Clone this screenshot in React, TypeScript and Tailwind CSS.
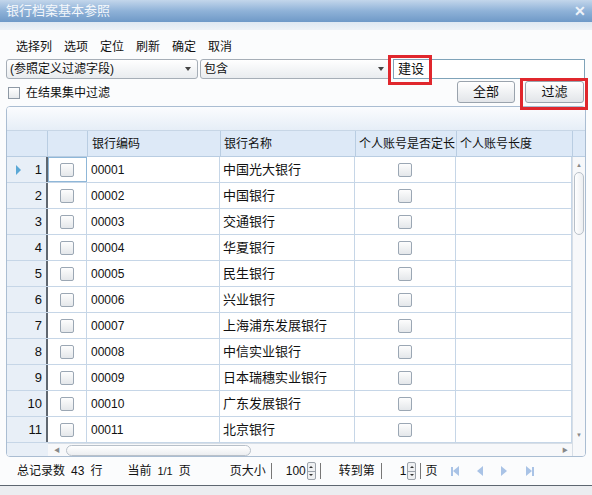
import React from "react";

const rows = [
  ["00001", "中国光大银行"],
  ["00002", "中国银行"],
  ["00003", "交通银行"],
  ["00004", "华夏银行"],
  ["00005", "民生银行"],
  ["00006", "兴业银行"],
  ["00007", "上海浦东发展银行"],
  ["00008", "中信实业银行"],
  ["00009", "日本瑞穗实业银行"],
  ["00010", "广东发展银行"],
  ["00011", "北京银行"],
];

function Box() {
  return (
    <div className="w-[14px] h-[14px] border border-[#9ba7b4] rounded-[2px] bg-gradient-to-b from-[#fdfdfd] to-[#e4e7ea]" />
  );
}

function Spin() {
  return (
    <div className="flex flex-col w-[9px] h-[18px] border border-[#9ca3ab] rounded-[2px] bg-[#eef0f2] ml-[1px]">
      <div className="flex-1 flex items-center justify-center border-b border-[#9ca3ab]">
        <div className="w-0 h-0 border-l-[2px] border-r-[2px] border-b-[2px] border-l-transparent border-r-transparent border-b-[#333]" />
      </div>
      <div className="flex-1 flex items-center justify-center">
        <div className="w-0 h-0 border-l-[2px] border-r-[2px] border-t-[2px] border-l-transparent border-r-transparent border-t-[#333]" />
      </div>
    </div>
  );
}

function Combo({ text, w }: { text: string; w: string }) {
  return (
    <div className={`${w} h-[20px] border border-[#a6aeb7] rounded-[3px] bg-gradient-to-b from-[#ffffff] to-[#e9ecef] flex items-center pl-[3px] pr-[6px]`}>
      <span className="flex-1">{text}</span>
      <div className="w-0 h-0 border-l-[3px] border-r-[3px] border-t-[4px] border-l-transparent border-r-transparent border-t-[#444]" />
    </div>
  );
}

export default function App() {
  const font = { fontFamily: '"Liberation Sans", "Noto Sans CJK SC", sans-serif' };
  return (
    <div className="relative w-[592px] h-[495px] bg-[#ebedf0] flex flex-col text-[12px] text-[#111] overflow-hidden" style={font}>
      {/* title bar */}
      <div className="h-[22px] flex items-center justify-between px-[6px] bg-gradient-to-b from-[#c3d6eb] via-[#8fb2d8] to-[#6f99c7]">
        <span className="text-[13px] text-[#f4f7fb]">银行档案基本参照</span>
        <span className="text-[14px] font-bold text-[#eef3f9] leading-none">✕</span>
      </div>
      <div className="h-[8px] bg-gradient-to-b from-[#dfe8f2] to-[#eef2f7]" />
      {/* content */}
      <div className="flex-1 flex flex-col bg-[#fbfcfd] px-[6px]">
        {/* menu */}
        <div className="h-[27px] flex items-end pb-[1px] pl-[10px] gap-[12px] text-[12px]">
          <span>选择列</span>
          <span>选项</span>
          <span>定位</span>
          <span>刷新</span>
          <span>确定</span>
          <span>取消</span>
        </div>
        {/* filter row */}
        <div className="mt-[2px] flex items-center gap-[2px] h-[20px]">
          <Combo text="(参照定义过滤字段)" w="w-[192px]" />
          <Combo text="包含" w="w-[191px]" />
          <div className="w-[192px] h-[20px] border border-[#7fa3b9] bg-white flex items-center pl-[4px] text-[13px]">建设</div>
        </div>
        {/* check + buttons */}
        <div className="flex items-start h-[25px] mt-[2px]">
          <div className="flex items-center mt-[3px] ml-[2px] gap-[6px]">
            <div className="w-[12px] h-[12px] border border-[#8e99a5] bg-gradient-to-b from-white to-[#e6e9ec]" />
            <span>在结果集中过滤</span>
          </div>
          <div className="ml-auto flex gap-[10px] mr-[2px]">
            <div className="w-[58px] h-[22px] border border-[#9aa3ad] rounded-[3px] bg-gradient-to-b from-white to-[#e2e5e9] flex items-center justify-center text-[13px]">全部</div>
            <div className="w-[59px] h-[22px] border border-[#9aa3ad] rounded-[3px] bg-gradient-to-b from-white to-[#e2e5e9] flex items-center justify-center text-[13px]">过滤</div>
          </div>
        </div>
        {/* grid */}
        <div className="w-[580px] h-[351px] border border-[#aabdd2] rounded-[4px] overflow-hidden flex flex-col bg-white">
          <div className="h-[24px] bg-gradient-to-b from-[#fbfcfe] to-[#e6eef7] border-b border-[#c7d6e6]" />
          <div className="flex h-[26px] bg-[#dde9f7] border-b border-[#b9cde2]">
            <div className="w-[41px] border-r border-[#b9cde2]" />
            <div className="w-[40px] border-r border-[#b9cde2]" />
            <div className="w-[133px] border-r border-[#b9cde2] flex items-center pl-[4px]">银行编码</div>
            <div className="w-[135px] border-r border-[#b9cde2] flex items-center pl-[3px]">银行名称</div>
            <div className="w-[101px] border-r border-[#b9cde2] flex items-center pl-[3px] overflow-hidden whitespace-nowrap">个人账号是否定长</div>
            <div className="w-[116px] border-r border-[#b9cde2] flex items-center pl-[3px]">个人账号长度</div>
            <div className="flex-1" />
          </div>
          <div className="flex flex-1">
            <div className="flex flex-col">
              {rows.map((r, i) => (
                <div key={i} className="flex h-[26px] border-b border-[#c6d6e7]">
                  <div className="relative w-[41px] bg-[#e8eff7] flex items-center justify-end pr-[4px] text-[13px] border-r-2 border-[#5f6770]">
                    {i === 0 && (
                      <div className="absolute left-[9px] top-[8px] w-0 h-0 border-t-[5px] border-b-[5px] border-l-[5px] border-t-transparent border-b-transparent border-l-[#5aa8d6]" />
                    )}
                    {i + 1}
                  </div>
                  <div className={`w-[39px] flex items-center justify-center border-r border-[#c6d6e7] ${i === 0 ? "outline outline-1 outline-[#8fb7d8] -outline-offset-1" : ""}`}>
                    <Box />
                  </div>
                  <div className="w-[133px] border-r border-[#c6d6e7] flex items-center pl-[4px]">{r[0]}</div>
                  <div className="w-[135px] border-r border-[#c6d6e7] flex items-center pl-[3px] text-[13px]">{r[1]}</div>
                  <div className="w-[101px] border-r border-[#c6d6e7] flex items-center justify-center">
                    <Box />
                  </div>
                  <div className="w-[116px] border-r border-[#c6d6e7]" />
                </div>
              ))}
              {/* h scroll */}
              <div className="flex h-[13px] bg-[#f3f6fa]">
                <div className="w-[41px] bg-[#e8eff7]" />
                <div className="flex-1 flex items-center bg-[#f7f8fa] border-t border-[#d7dee6]">
                  <span className="text-[6px] text-[#888] ml-[6px]">◀</span>
                  <div className="ml-[6px] w-[185px] h-[11px] border border-[#b8c0c9] rounded-full bg-gradient-to-b from-white to-[#eceef1]" />
                  <span className="ml-auto text-[6px] text-[#888] mr-[4px]">▶</span>
                </div>
              </div>
            </div>
            {/* v scroll */}
            <div className="flex-1 flex flex-col items-center bg-[#f7f8fa] border-l border-[#d7dee6]">
              <span className="text-[6px] text-[#888] mt-[4px]">▲</span>
              <div className="mt-[2px] w-[10px] h-[63px] border border-[#b8c0c9] rounded-full bg-gradient-to-r from-white to-[#eceef1]" />
              <span className="text-[6px] text-[#888] mt-auto mb-[16px]">▼</span>
            </div>
          </div>
        </div>
        {/* footer */}
        <div className="h-[29px] flex items-center text-[12px] border-b border-[#5d6670] -mx-[6px] px-[17px] bg-[#fbfcfd]">
          <span>总记录数</span>
          <span className="ml-[6px]">43</span>
          <span className="ml-[6px]">行</span>
          <span className="ml-[25px]">当前</span>
          <span className="ml-[6px] text-[11px]">1/1</span>
          <span className="ml-[6px]">页</span>
          <span className="ml-[39px]">页大小</span>
          <div className="w-px h-[16px] bg-[#777] ml-[5px]" />
          <span className="ml-[14px]">100</span>
          <Spin />
          <div className="w-px h-[16px] bg-[#777] ml-[4px]" />
          <span className="ml-[18px]">转到第</span>
          <div className="w-px h-[16px] bg-[#777] ml-[6px]" />
          <span className="ml-[18px]">1</span>
          <Spin />
          <div className="w-px h-[16px] bg-[#777] ml-[4px]" />
          <span className="ml-[4px] text-[12px]">页</span>
          <div className="ml-[14px] flex items-center">
            <div className="flex items-center">
              <div className="w-[2px] h-[9px] bg-[#a9c3e6]" />
              <div className="w-0 h-0 border-t-[5px] border-b-[5px] border-r-[6px] border-t-transparent border-b-transparent border-r-[#a9c3e6]" />
            </div>
            <div className="ml-[18px] w-0 h-0 border-t-[5px] border-b-[5px] border-r-[6px] border-t-transparent border-b-transparent border-r-[#a9c3e6]" />
            <div className="ml-[18px] w-0 h-0 border-t-[5px] border-b-[5px] border-l-[6px] border-t-transparent border-b-transparent border-l-[#a9c3e6]" />
            <div className="ml-[19px] flex items-center">
              <div className="w-0 h-0 border-t-[5px] border-b-[5px] border-l-[6px] border-t-transparent border-b-transparent border-l-[#a9c3e6]" />
              <div className="w-[2px] h-[9px] bg-[#a9c3e6]" />
            </div>
          </div>
        </div>
        <div className="flex-1 -mx-[6px] bg-[#ebedf0]" />
      </div>
      {/* red highlight boxes */}
      <div className="absolute left-[388px] top-[55px] w-[44px] h-[30px] border-[3px] border-[#e0272d]" />
      <div className="absolute left-[520px] top-[78px] w-[68px] h-[32px] border-[3px] border-[#e0272d]" />
    </div>
  );
}
